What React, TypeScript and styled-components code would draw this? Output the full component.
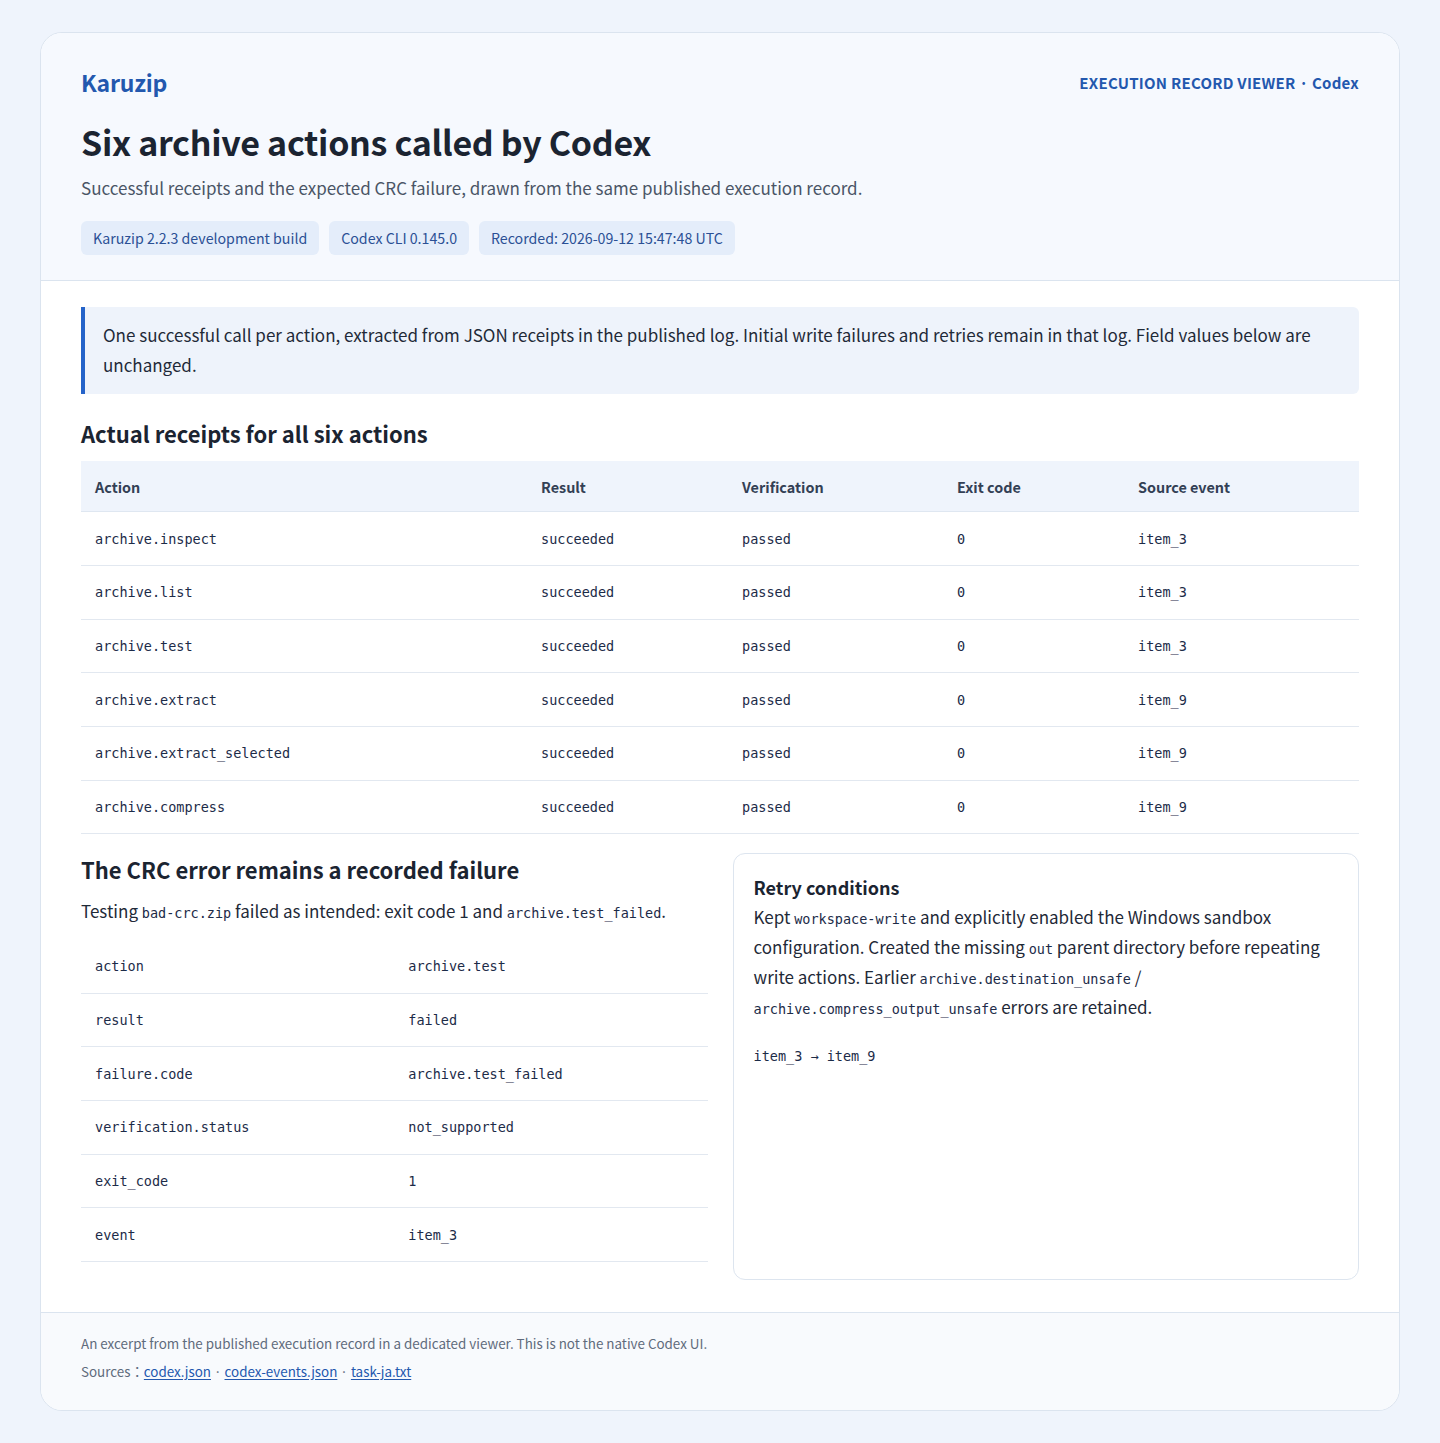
import React from "react";
import styled, { createGlobalStyle } from "styled-components";

const Global = createGlobalStyle`
  html, body { margin: 0; padding: 0; }
  body {
    background: #eff4fc;
    font-family: "Noto Sans CJK JP", "Noto Sans", sans-serif;
    color: #1b2431;
  }
  * { box-sizing: border-box; }
`;

const Page = styled.div`
  padding: 32px 40px 32px 40px;
`;

const Card = styled.main`
  background: #ffffff;
  border: 1px solid #dbe4ef;
  border-radius: 22px;
  overflow: hidden;
`;

const Header = styled.header`
  background: #f6f9fe;
  border-bottom: 1px solid #dbe4ef;
  padding: 32px 40px 25px;
`;

const TopRow = styled.div`
  display: flex;
  justify-content: space-between;
  align-items: center;
`;

const Brand = styled.div`
  font-size: 23px;
  font-weight: 700;
  color: #2358ae;
  letter-spacing: -0.2px;
`;

const Kicker = styled.div`
  font-size: 15px;
  font-weight: 700;
  color: #2358ae;
  letter-spacing: 0.25px;
`;

const Title = styled.h1`
  margin: 23px 0 0;
  font-size: 34px;
  line-height: 1.2;
  font-weight: 700;
  color: #1b2431;
  letter-spacing: -0.3px;
`;

const Subtitle = styled.p`
  margin: 12px 0 0;
  font-size: 17px;
  color: #4a5566;
`;

const Badges = styled.div`
  display: flex;
  gap: 10px;
  margin-top: 21px;
`;

const Badge = styled.span`
  background: #e4edfa;
  color: #2b5095;
  font-size: 14.2px;
  height: 34px;
  display: inline-flex;
  align-items: center;
  padding: 0 12px;
  border-radius: 6px;
`;

const Body = styled.section`
  padding: 26px 40px 32px;
`;

const Note = styled.div`
  background: #eef3fb;
  border-left: 4px solid #2563c9;
  border-radius: 0 6px 6px 0;
  padding: 13px 22px 14px 18px;
  font-size: 17px;
  line-height: 30px;
  color: #1f2a38;
`;

const H2 = styled.h2<{ $mt?: number; $mb?: number }>`
  margin: ${(p) => p.$mt ?? 24}px 0 ${(p) => p.$mb ?? 13}px;
  font-size: 22px;
  font-weight: 700;
  color: #1b2431;
  line-height: 30px;
`;

const Table = styled.table<{ $mb?: number }>`
  width: 100%;
  border-collapse: collapse;
  margin-bottom: ${(p) => p.$mb ?? 0}px;
`;

const Th = styled.th<{ $w?: string }>`
  background: #eff4fc;
  text-align: left;
  font-size: 14.4px;
  font-weight: 700;
  color: #334055;
  padding: 0 14px;
  height: 51px;
  border-bottom: 1px solid #dfe7f1;
  width: ${(p) => p.$w ?? "auto"};
`;

const Td = styled.td<{ $w?: string }>`
  font-family: "DejaVu Sans Mono", "Liberation Mono", monospace;
  font-size: 13.5px;
  color: #1c2b48;
  padding: 0 14px;
  height: 53.7px;
  border-bottom: 1px solid #e2e8f0;
  width: ${(p) => p.$w ?? "auto"};
`;

const Split = styled.div`
  display: grid;
  grid-template-columns: 1fr 1fr;
  gap: 25px;
`;

const Col = styled.div``;

const Para = styled.p`
  margin: 0 0 13px;
  font-size: 17px;
  line-height: 30px;
  color: #1f2a38;
`;

const Code = styled.code`
  font-family: "DejaVu Sans Mono", "Liberation Mono", monospace;
  font-size: 13.5px;
  line-height: 1;
  color: #1c2b48;
`;

const Aside = styled.aside`
  margin-top: 19px;
  border: 1px solid #dde5ef;
  border-radius: 12px;
  padding: 20px 20px;
  background: #fff;
`;

const AsideTitle = styled.h3`
  margin: 0 0 2px;
  font-size: 18px;
  font-weight: 700;
  color: #1b2431;
  line-height: 26px;
`;

const AsideText = styled.p`
  margin: 0;
  font-size: 17px;
  line-height: 30px;
  color: #1f2a38;
`;

const Flow = styled.div`
  margin-top: 26px;
  font-family: "DejaVu Sans Mono", "Liberation Mono", monospace;
  font-size: 13.5px;
  color: #1c2b48;
`;

const Footer = styled.footer`
  background: #f8fafd;
  border-top: 1px solid #dbe4ef;
  padding: 16px 40px 25px;
  font-size: 13.4px;
  color: #5f6b7c;
`;

const FootLine = styled.div`
  line-height: 28px;
`;

const Link = styled.a`
  color: #2358ae;
  text-decoration: underline;
  text-underline-offset: 2px;
`;

const receipts = [
  ["archive.inspect", "item_3"],
  ["archive.list", "item_3"],
  ["archive.test", "item_3"],
  ["archive.extract", "item_9"],
  ["archive.extract_selected", "item_9"],
  ["archive.compress", "item_9"],
];

const failure = [
  ["action", "archive.test"],
  ["result", "failed"],
  ["failure.code", "archive.test_failed"],
  ["verification.status", "not_supported"],
  ["exit_code", "1"],
  ["event", "item_3"],
];

export default function App() {
  return (
    <Page>
      <Global />
      <Card>
        <Header>
          <TopRow>
            <Brand>Karuzip</Brand>
            <Kicker>EXECUTION RECORD VIEWER · Codex</Kicker>
          </TopRow>
          <Title>Six archive actions called by Codex</Title>
          <Subtitle>
            Successful receipts and the expected CRC failure, drawn from the same published execution record.
          </Subtitle>
          <Badges>
            <Badge>Karuzip 2.2.3 development build</Badge>
            <Badge>Codex CLI 0.145.0</Badge>
            <Badge>Recorded: 2026-09-12 15:47:48 UTC</Badge>
          </Badges>
        </Header>
        <Body>
          <Note>
            One successful call per action, extracted from JSON receipts in the published log. Initial write failures
            and retries remain in that log. Field values below are unchanged.
          </Note>
          <H2>Actual receipts for all six actions</H2>
          <Table>
            <thead>
              <tr>
                <Th $w="446px">Action</Th>
                <Th $w="201px">Result</Th>
                <Th $w="215px">Verification</Th>
                <Th $w="181px">Exit code</Th>
                <Th>Source event</Th>
              </tr>
            </thead>
            <tbody>
              {receipts.map(([a, e]) => (
                <tr key={a}>
                  <Td>{a}</Td>
                  <Td>succeeded</Td>
                  <Td>passed</Td>
                  <Td>0</Td>
                  <Td>{e}</Td>
                </tr>
              ))}
            </tbody>
          </Table>
          <Split>
            <Col>
              <H2 $mt={20} $mb={12}>The CRC error remains a recorded failure</H2>
              <Para>
                Testing <Code>bad-crc.zip</Code> failed as intended: exit code 1 and <Code>archive.test_failed</Code>.
              </Para>
              <Table $mb={18}>
                <tbody>
                  {failure.map(([k, v]) => (
                    <tr key={k}>
                      <Td $w="50%">{k}</Td>
                      <Td>{v}</Td>
                    </tr>
                  ))}
                </tbody>
              </Table>
            </Col>
            <Aside>
              <AsideTitle>Retry conditions</AsideTitle>
              <AsideText>
                Kept <Code>workspace-write</Code> and explicitly enabled the Windows sandbox configuration. Created the
                missing <Code>out</Code> parent directory before repeating write actions. Earlier{" "}
                <Code>archive.destination_unsafe</Code> / <Code>archive.compress_output_unsafe</Code> errors are
                retained.
              </AsideText>
              <Flow>item_3 → item_9</Flow>
            </Aside>
          </Split>
        </Body>
        <Footer>
          <FootLine>An excerpt from the published execution record in a dedicated viewer. This is not the native Codex UI.</FootLine>
          <FootLine>
            Sources：<Link href="#">codex.json</Link> · <Link href="#">codex-events.json</Link> ·{" "}
            <Link href="#">task-ja.txt</Link>
          </FootLine>
        </Footer>
      </Card>
    </Page>
  );
}
